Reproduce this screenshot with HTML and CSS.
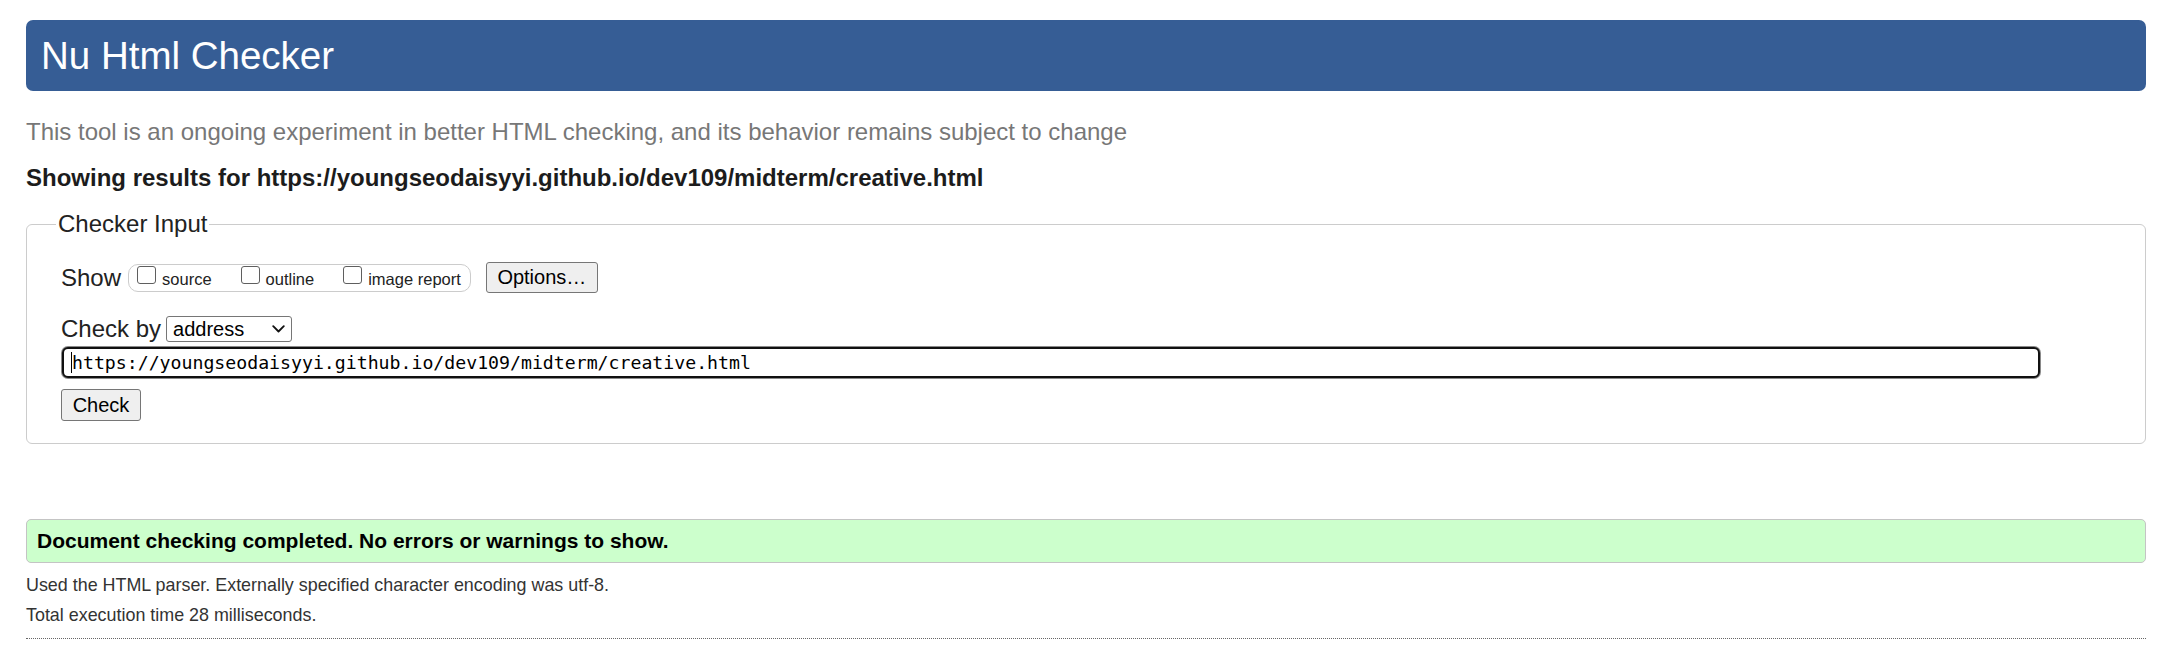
FILE: index.html
```html
<!DOCTYPE html>
<html lang="en">
<head>
<meta charset="utf-8">
<title>Nu Html Checker</title>
<link rel="stylesheet" href="styles.css">
</head>
<body>
<h1 class="title">Nu Html Checker</h1>
<p class="intro">This tool is an ongoing experiment in better HTML checking, and its behavior remains subject to change</p>
<p class="showing">Showing results for https://youngseodaisyyi.github.io/dev109/midterm/creative.html</p>
<fieldset class="checker">
  <legend class="legend">Checker Input</legend>
  <div class="show-row">
    <span class="lbl">Show</span>
    <div class="pill">
      <label class="opt"><span class="cb"></span><span class="opt-text">source</span></label>
      <label class="opt"><span class="cb"></span><span class="opt-text">outline</span></label>
      <label class="opt"><span class="cb"></span><span class="opt-text">image report</span></label>
    </div>
    <button class="btn btn-options" type="button">Options…</button>
  </div>
  <div class="by-row">
    <span class="lbl">Check by</span>
    <span class="select"><span class="select-text">address</span>
      <svg class="chev" width="13" height="8" viewBox="0 0 13 8"><path d="M1.2 1.2 L6.5 6.5 L11.8 1.2" fill="none" stroke="#111" stroke-width="1.8" stroke-linecap="round" stroke-linejoin="round"/></svg>
    </span>
  </div>
  <div class="url-row">
    <div class="url-box">
      <span class="caret"></span>
      <input class="url" type="text" value="https://youngseodaisyyi.github.io/dev109/midterm/creative.html">
    </div>
  </div>
  <div class="check-row">
    <button class="btn btn-check" type="submit">Check</button>
  </div>
</fieldset>
<div class="ok">Document checking completed. No errors or warnings to show.</div>
<p class="details first">Used the HTML parser. Externally specified character encoding was utf-8.</p>
<p class="details">Total execution time 28 milliseconds.</p>
<hr class="rule">
</body>
</html>
```
FILE: styles.css
```css
html, body {
  background: #fff;
}
body {
  margin: 0;
  padding: 20px 17px 0 26px;
  font-family: "Liberation Sans", Arial, sans-serif;
  color: #222;
}
.title {
  margin: 0;
  height: 71px;
  display: flex;
  align-items: center;
  padding-left: 15px;
  background: #365d95;
  color: #fff;
  font-size: 38.5px;
  font-weight: normal;
  border-radius: 7px;
}
.intro {
  margin: 28px 0 0;
  font-size: 24px;
  line-height: 26px;
  color: #777;
}
.showing {
  margin: 20px 0 0;
  font-size: 24px;
  line-height: 26px;
  font-weight: bold;
  color: #1c1c1c;
}
.checker {
  margin: 19px 0 0;
  border: 1px solid #ccc;
  border-radius: 6px;
  padding: 24px 0 22px 34px;
  min-width: 0;
}
.legend {
  font-size: 24px;
  line-height: 28px;
  padding: 0 2px;
  margin-left: -5px;
  color: #222;
}
.lbl {
  font-size: 24px;
  line-height: 28px;
  color: #222;
}
.show-row {
  display: flex;
  align-items: center;
  height: 31px;
}
.show-row .lbl {
  margin-right: 7px;
}
.pill {
  display: flex;
  align-items: flex-start;
  gap: 29px;
  height: 28px;
  box-sizing: border-box;
  border: 1px solid #ccc;
  border-radius: 10px;
  padding: 0 9px 0 8px;
}
.opt {
  display: flex;
  align-items: flex-start;
  font-size: 16.5px;
  color: #222;
}
.cb {
  width: 19px;
  height: 18px;
  box-sizing: border-box;
  border: 1.5px solid #5f5f5f;
  border-radius: 3px;
  background: #fff;
  margin-top: 1px;
  margin-right: 6px;
}
.opt-text {
  line-height: 20px;
  margin-top: 4px;
}
.btn {
  font-family: "Liberation Sans", Arial, sans-serif;
  font-size: 20px;
  color: #000;
  background: #efefef;
  border: 1px solid #767676;
  border-radius: 3px;
  padding: 0;
  box-sizing: border-box;
}
.btn-options {
  margin-left: 15px;
  width: 112px;
  height: 31px;
}
.by-row {
  display: flex;
  align-items: center;
  margin-top: 22px;
}
.select {
  margin-left: 5px;
  width: 126px;
  height: 26px;
  box-sizing: border-box;
  border: 1px solid #767676;
  border-radius: 3px;
  display: flex;
  align-items: center;
  justify-content: space-between;
  padding: 0 6px 0 6px;
  font-size: 20px;
  color: #000;
}
.chev {
  display: block;
}
.url-row {
  margin-top: 3px;
  padding: 1px 105px 1px 1px;
}
.url-box {
  position: relative;
}
.caret {
  position: absolute;
  left: 9px;
  top: 5px;
  width: 1px;
  height: 21px;
  background: #000;
}
.url {
  display: block;
  width: 100%;
  height: 31px;
  box-sizing: border-box;
  border: 2px solid #111;
  border-radius: 6px;
  box-shadow: 0 0 0 1px #8a8a8a;
  padding: 0 0 0 8px;
  margin: 0;
  font-family: "DejaVu Sans Mono", "Liberation Mono", monospace;
  font-size: 18.2px;
  color: #000;
  background: #fff;
  outline: none;
}
.check-row {
  margin-top: 10px;
}
.btn-check {
  width: 80px;
  height: 32px;
}
.ok {
  margin-top: 75px;
  background: #ccffcc;
  border: 1px solid #c4c4c4;
  border-radius: 5px;
  padding: 8px 10px;
  font-size: 21px;
  line-height: 26px;
  font-weight: bold;
  color: #000;
}
.details {
  margin: 0;
  font-size: 17.9px;
  line-height: 30px;
  color: #333;
}
.details.first {
  margin-top: 7px;
}
.rule {
  margin: 8px 0 0;
  border: 0;
  border-top: 1px dotted #666;
  height: 0;
}
```
